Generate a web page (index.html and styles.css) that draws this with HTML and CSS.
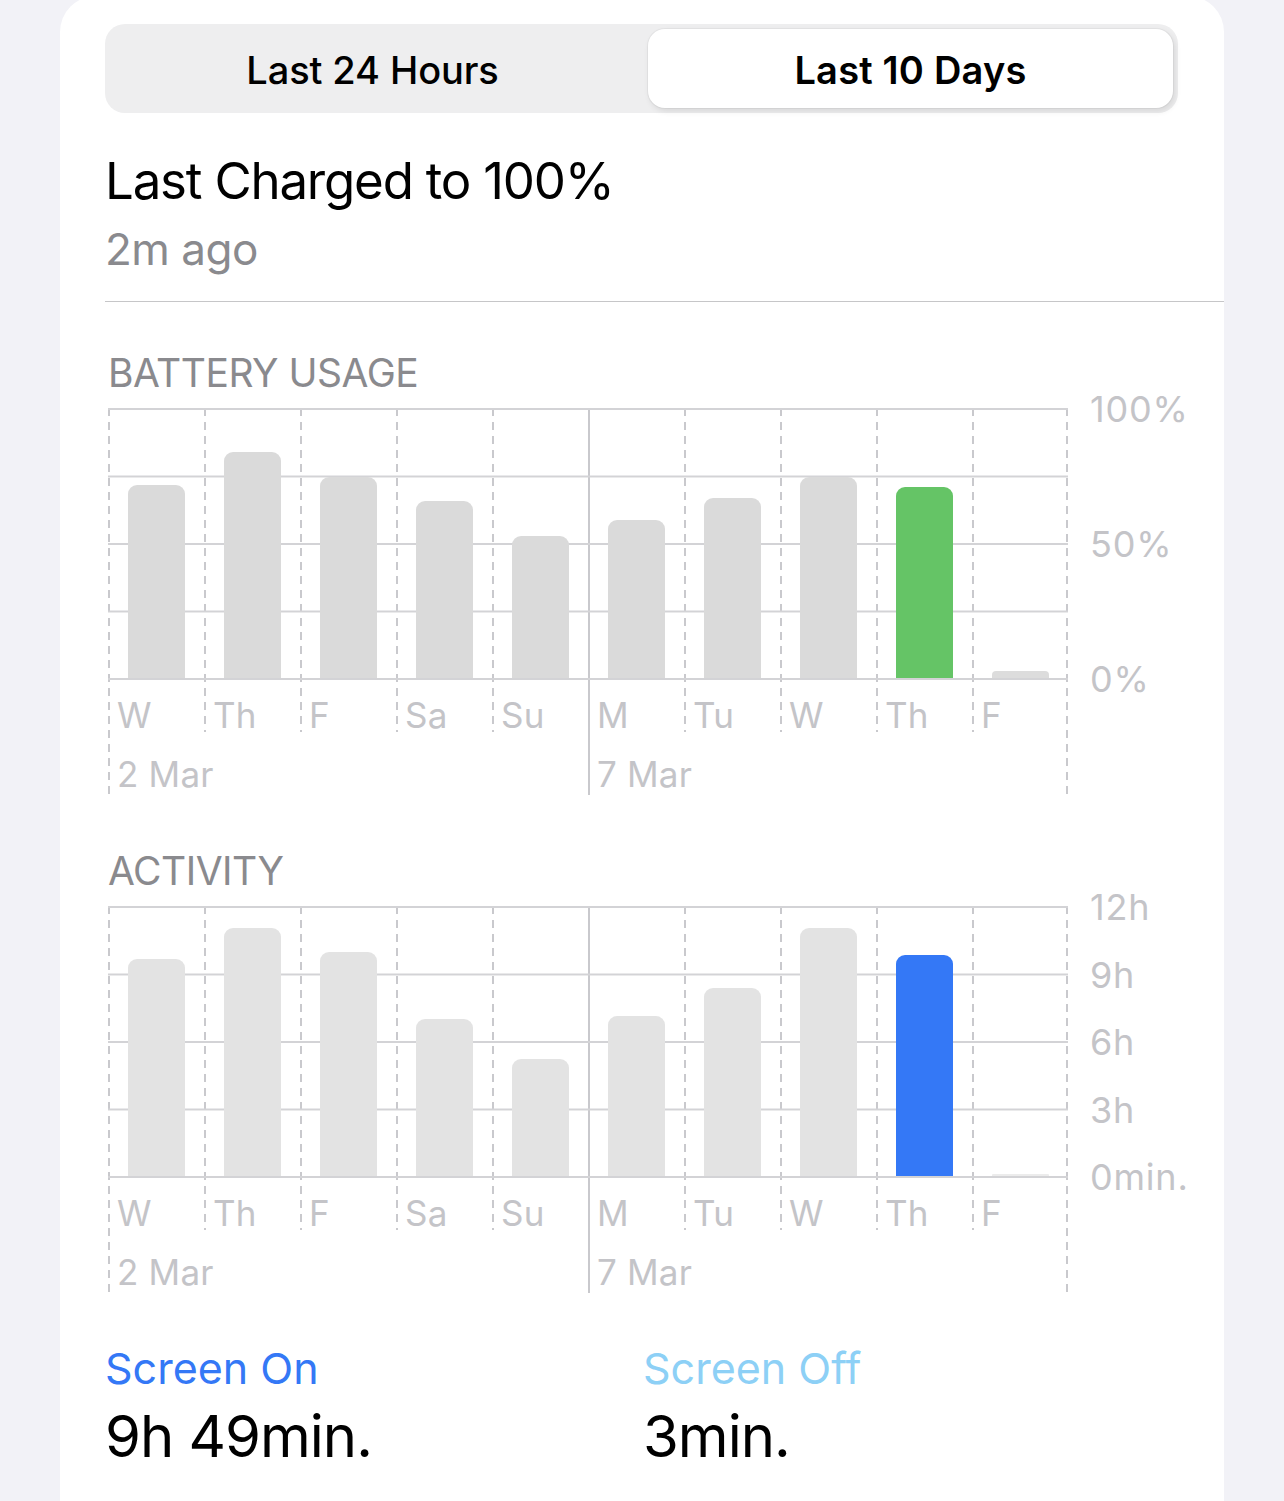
FILE: index.html
```html
<!DOCTYPE html>
<html lang="en">
<head>
<meta charset="utf-8">
<title>Battery</title>
<link rel="stylesheet" href="styles.css">
</head>
<body>
<div class="card">
  <div class="segmented">
    <div class="seg">Last 24 Hours</div>
    <div class="seg seg-active">Last 10 Days</div>
  </div>

  <div class="charged">
    <div class="charged-title">Last Charged to 100%</div>
    <div class="charged-sub">2m ago</div>
  </div>

  <div class="divider"></div>

  <section class="chart-section">
    <h2 class="section-title">BATTERY USAGE</h2>
    <div class="chart">
      <div class="cols battery">
        <div class="col col-first"><div class="slot"><div class="bar" style="height:193px"></div></div><div class="day">W</div><div class="date">2 Mar</div></div>
        <div class="col"><div class="slot"><div class="bar" style="height:226px"></div></div><div class="day">Th</div><div class="date"></div></div>
        <div class="col"><div class="slot"><div class="bar" style="height:201px"></div></div><div class="day">F</div><div class="date"></div></div>
        <div class="col"><div class="slot"><div class="bar" style="height:177px"></div></div><div class="day">Sa</div><div class="date"></div></div>
        <div class="col"><div class="slot"><div class="bar" style="height:142px"></div></div><div class="day">Su</div><div class="date"></div></div>
        <div class="col col-week"><div class="slot"><div class="bar" style="height:158px"></div></div><div class="day">M</div><div class="date">7 Mar</div></div>
        <div class="col"><div class="slot"><div class="bar" style="height:180px"></div></div><div class="day">Tu</div><div class="date"></div></div>
        <div class="col"><div class="slot"><div class="bar" style="height:201px"></div></div><div class="day">W</div><div class="date"></div></div>
        <div class="col"><div class="slot"><div class="bar bar-green" style="height:191px"></div></div><div class="day">Th</div><div class="date"></div></div>
        <div class="col col-last"><div class="slot"><div class="bar bar-tiny" style="height:7px"></div></div><div class="day">F</div><div class="date"></div></div>
      </div>
      <div class="yaxis">
        <span>100%</span>
        <span>50%</span>
        <span>0%</span>
      </div>
    </div>
  </section>

  <section class="chart-section chart-section-second">
    <h2 class="section-title">ACTIVITY</h2>
    <div class="chart">
      <div class="cols activity">
        <div class="col col-first"><div class="slot"><div class="bar" style="height:217px"></div></div><div class="day">W</div><div class="date">2 Mar</div></div>
        <div class="col"><div class="slot"><div class="bar" style="height:248px"></div></div><div class="day">Th</div><div class="date"></div></div>
        <div class="col"><div class="slot"><div class="bar" style="height:224px"></div></div><div class="day">F</div><div class="date"></div></div>
        <div class="col"><div class="slot"><div class="bar" style="height:157px"></div></div><div class="day">Sa</div><div class="date"></div></div>
        <div class="col"><div class="slot"><div class="bar" style="height:117px"></div></div><div class="day">Su</div><div class="date"></div></div>
        <div class="col col-week"><div class="slot"><div class="bar" style="height:160px"></div></div><div class="day">M</div><div class="date">7 Mar</div></div>
        <div class="col"><div class="slot"><div class="bar" style="height:188px"></div></div><div class="day">Tu</div><div class="date"></div></div>
        <div class="col"><div class="slot"><div class="bar" style="height:248px"></div></div><div class="day">W</div><div class="date"></div></div>
        <div class="col"><div class="slot"><div class="bar bar-blue" style="height:221px"></div></div><div class="day">Th</div><div class="date"></div></div>
        <div class="col col-last"><div class="slot"><div class="bar bar-faint" style="height:2px"></div></div><div class="day">F</div><div class="date"></div></div>
      </div>
      <div class="yaxis">
        <span>12h</span>
        <span>9h</span>
        <span>6h</span>
        <span>3h</span>
        <span>0min.</span>
      </div>
    </div>
  </section>

  <div class="screen">
    <div class="screen-item">
      <div class="screen-label screen-on">Screen On</div>
      <div class="screen-value">9h 49min.</div>
    </div>
    <div class="screen-item">
      <div class="screen-label screen-off">Screen Off</div>
      <div class="screen-value">3min.</div>
    </div>
  </div>
</div>
</body>
</html>
```

FILE: styles.css
```css
html, body {
  margin: 0;
  padding: 0;
}

body {
  background: #f2f2f7;
  font-family: "Inter", "Liberation Sans", sans-serif;
  color: #000;
  overflow: hidden;
}

.card {
  margin: -4px 60px 0;
  background: #fff;
  border-radius: 36px 36px 0 0;
  padding: 28px 46px 80px 45px;
  min-height: 1500px;
  box-sizing: border-box;
}

/* segmented control */
.segmented {
  display: grid;
  grid-template-columns: 1fr 1fr;
  gap: 13px;
  height: 89px;
  box-sizing: border-box;
  padding: 5px;
  background: #eeeeef;
  border-radius: 20px;
}

.seg {
  display: flex;
  align-items: center;
  justify-content: center;
  padding-top: 2px;
  font-size: 38px;
  font-weight: 500;
  letter-spacing: -0.1px;
  border-radius: 17px;
}

.seg-active {
  background: #fff;
  font-weight: 600;
  letter-spacing: 0.2px;
  box-shadow: 0 0 0 1px rgba(0, 0, 0, 0.04), 2px 3px 6px rgba(0, 0, 0, 0.10);
}

/* last charged */
.charged-title {
  margin-top: 38px;
  font-size: 51px;
  line-height: 60px;
  letter-spacing: -1.2px;
}

.charged-sub {
  margin-top: 12px;
  font-size: 44px;
  line-height: 52px;
  color: #8a8a8e;
  letter-spacing: -0.5px;
}

.divider {
  height: 1px;
  margin: 26px -46px 0 0;
  background: #c6c6c8;
}

/* charts */
.section-title {
  margin: 47px 0 0 3px;
  font-size: 39px;
  line-height: 48px;
  font-weight: 400;
  color: #8a8a8e;
  letter-spacing: -0.5px;
}

.chart-section-second .section-title {
  margin-top: 52px;
}

.chart {
  display: flex;
  align-items: flex-start;
  margin: 11px 0 0 3px;
}

.cols {
  display: grid;
  grid-template-columns: repeat(10, 96px);
  width: 960px;
}

.col {
  display: flex;
  flex-direction: column;
  background: repeating-linear-gradient(to bottom, #c9c9cd 0 8px, transparent 8px 14px) left top / 2px 324px no-repeat;
}

.col-first {
  background: repeating-linear-gradient(to bottom, #c9c9cd 0 8px, transparent 8px 14px) left top / 2px 100% no-repeat;
}

.col-week {
  background: linear-gradient(#c9c9cd, #c9c9cd) left top / 2px 100% no-repeat;
}

.col-last {
  background:
    repeating-linear-gradient(to bottom, #c9c9cd 0 8px, transparent 8px 14px) left top / 2px 324px no-repeat,
    repeating-linear-gradient(to bottom, #c9c9cd 0 8px, transparent 8px 14px) right top / 2px 100% no-repeat;
}

.slot {
  height: 272px;
  box-sizing: border-box;
  padding-bottom: 2px;
  display: flex;
  align-items: flex-end;
  justify-content: center;
  background: linear-gradient(#d3d3d6 0 2px, transparent 2px) 0 0 / 100% 67.5px repeat-y;
}

.bar {
  width: 57px;
  border-radius: 9px 9px 0 0;
  background: #dadada;
}

.activity .bar {
  background: #e3e3e3;
}

.battery .bar-tiny {
  border-radius: 4px 4px 0 0;
  background: #dcdcdc;
}

.activity .bar-faint {
  border-radius: 1px 1px 0 0;
  background: #ececec;
}

.battery .bar-green {
  background: #65c466;
}

.activity .bar-blue {
  background: #3478f6;
}

.day,
.date {
  padding-left: 9px;
  font-size: 35px;
  line-height: 44px;
  color: #c4c4c8;
  letter-spacing: 0.2px;
}

.day {
  padding-top: 13px;
}

.date {
  margin-top: 15px;
  height: 40px;
  padding-bottom: 3px;
  white-space: nowrap;
}

.yaxis {
  display: flex;
  flex-direction: column;
  justify-content: space-between;
  height: 310px;
  margin: -19px 0 0 22px;
  font-size: 36px;
  line-height: 40px;
  color: #c4c4c8;
  letter-spacing: 0.8px;
}

/* screen on / off */
.screen {
  display: grid;
  grid-template-columns: 538px 1fr;
  margin-top: 50px;
}

.screen-label {
  font-size: 43px;
  line-height: 50px;
  letter-spacing: 0;
}

.screen-on {
  color: #3478f6;
}

.screen-off {
  color: #8dd0f6;
}

.screen-value {
  margin-top: 10px;
  font-size: 58px;
  line-height: 66px;
  letter-spacing: -1px;
}
```
